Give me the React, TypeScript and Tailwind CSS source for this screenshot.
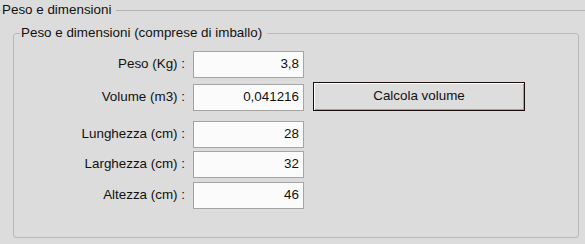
const fields = [
  { label: "Peso (Kg) :", value: "3,8", mt: "mt-0" },
  { label: "Volume (m3) :", value: "0,041216", mt: "mt-[6px]", button: true },
  { label: "Lunghezza (cm) :", value: "28", mt: "mt-[10px]" },
  { label: "Larghezza (cm) :", value: "32", mt: "mt-[3px]" },
  { label: "Altezza (cm) :", value: "46", mt: "mt-[4px]" },
];

export default function App() {
  return (
    <div
      className="w-[585px] h-[244px] bg-[#dcdcdc] text-[13.4px] text-[#111] overflow-hidden"
      style={{ fontFamily: '"Liberation Sans", Arial, sans-serif' }}
    >
      {/* Gruppo esterno: solo linea superiore */}
      <fieldset className="mt-[2px] border-t border-[#b4b4b4] pl-[1px]">
        <legend className="px-[1px] pr-[5px] leading-4">Peso e dimensioni</legend>

        {/* Gruppo interno */}
        <fieldset className="mt-[7px] ml-[12px] mr-[6px] h-[213px] border border-[#b9b9b9] rounded-[3px] pl-[6px]">
          <legend className="px-[1px] pr-[5px] leading-4">
            Peso e dimensioni (comprese di imballo)
          </legend>

          <div className="flex flex-col pt-[10px] -ml-[6px]">
            {fields.map((f) => (
              <div key={f.label} className={`flex items-center ${f.mt}`}>
                <span className="w-[172px] text-right pr-[1px]">{f.label}</span>
                <div className="ml-[7px] w-[111px] h-[27px] border border-[#a5a5a5] bg-[#fbfbfb] flex items-center justify-end pr-[4px]">
                  {f.value}
                </div>
                {f.button && (
                  <button
                    type="button"
                    className="ml-[9px] w-[212px] h-[29px] -mt-[3px] border border-[#1e0f0f] bg-[#dddddd] shadow-[inset_1px_1px_0_#ffffff,inset_-1px_-1px_0_#a0a0a0] text-[#111]"
                  >
                    Calcola volume
                  </button>
                )}
              </div>
            ))}
          </div>
        </fieldset>
      </fieldset>
    </div>
  );
}
